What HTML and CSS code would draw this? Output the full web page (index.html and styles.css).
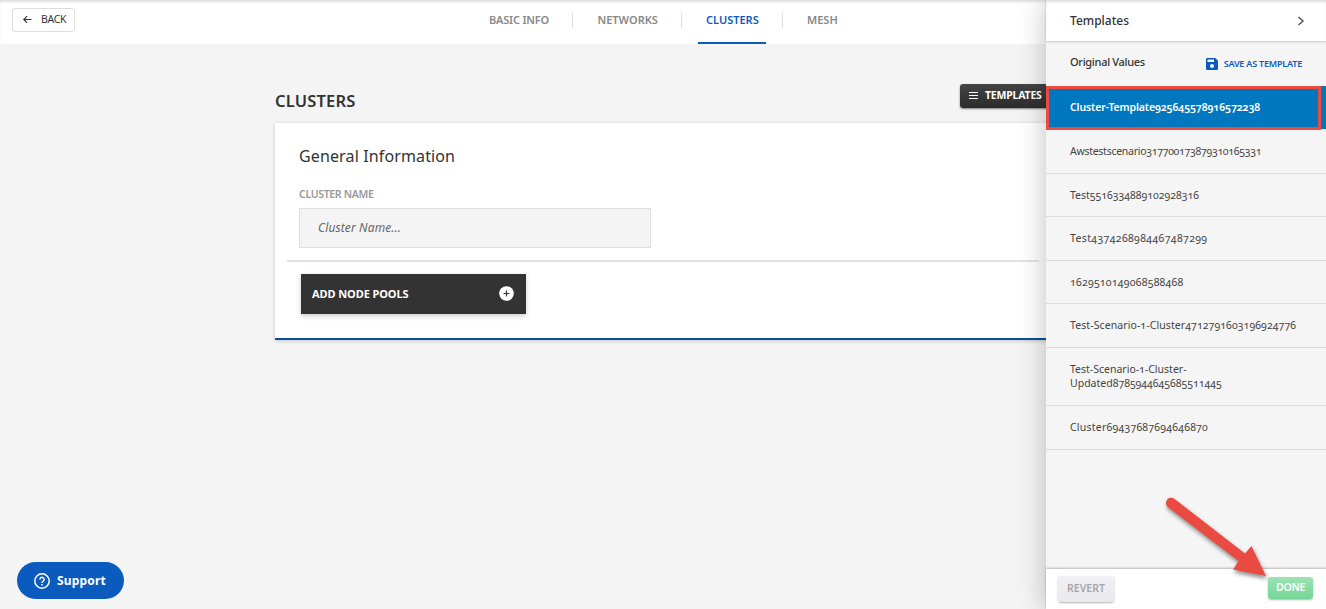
FILE: index.html
```html
<!DOCTYPE html>
<html lang="en">
<head>
<meta charset="utf-8">
<title>Clusters</title>
<link rel="stylesheet" href="styles.css">
</head>
<body>
<div class="app">
  <header class="topbar">
    <button class="back"><svg width="9" height="9" viewBox="0 0 9 9"><path d="M8.500 4.500H1M4 1.200L.8 4.500 4 7.800" fill="none" stroke="#333" stroke-width="1.200"/></svg><span>BACK</span></button>
    <nav class="tabs">
      <a class="tab tab-info">BASIC INFO</a>
      <a class="tab tab-net">NETWORKS</a>
      <a class="tab tab-clusters active">CLUSTERS</a>
      <a class="tab tab-mesh">MESH</a>
    </nav>
  </header>
  <main class="content">
    <div class="heading">
      <h1>CLUSTERS</h1>
      <button class="templates-btn"><svg width="9" height="10" viewBox="0 0 9 10"><path d="M0 2.500h9M0 5.500h9M0 8.500h9" stroke="#fff"/></svg><span>TEMPLATES</span></button>
    </div>
    <section class="card">
      <h2>General Information</h2>
      <label class="label">CLUSTER NAME</label>
      <div class="input">Cluster Name...</div>
      <div class="rule"></div>
      <button class="add"><span>ADD NODE POOLS</span><svg width="15" height="15" viewBox="0 0 15 15"><circle cx="7.500" cy="7.500" r="7.300" fill="#fff"/><path d="M4.500 7.500h6M7.500 4.500v6" stroke="#333" stroke-width="1.200"/></svg></button>
    </section>
  </main>
  <button class="support"><svg width="16" height="16" viewBox="0 0 16 16" fill="none" stroke="#fff"><circle cx="8" cy="8" r="7.200" stroke-width="1.500"/><path d="M5.900 6.400a2.100 2.100 0 1 1 3.300 1.700C8.400 8.700 8 8.900 8 9.900" stroke-width="1.400"/><path d="M8 11v1.500" stroke-width="1.500"/></svg><span>Support</span></button>
  <aside class="panel">
    <div class="panel-head"><span>Templates</span><svg width="8" height="10" viewBox="0 0 8 10"><path d="M1.500 1L6 5 1.500 9" fill="none" stroke="#555" stroke-width="1.500"/></svg></div>
    <div class="panel-sub"><span class="original">Original Values</span><a class="save"><svg width="12" height="12" viewBox="0 0 12 12"><path fill="#0b5bbf" fill-rule="evenodd" d="M1.300 0h8L12 2.700v8A1.300 1.300 0 0 1 10.700 12H1.300A1.300 1.300 0 0 1 0 10.700V1.300A1.300 1.300 0 0 1 1.300 0zM1.500 1.500V4H8V1.500zM6 6a2 2 0 1 0 .001 4A2 2 0 0 0 6 6z"/></svg><span>SAVE AS TEMPLATE</span></a></div>
    <ul class="list">
      <li class="item selected">Cluster-Template925645578916572238</li>
      <li class="item snug">Awstestscenario317700173879310165331</li>
      <li class="item">Test5516334889102928316</li>
      <li class="item loose">Test4374268984467487299</li>
      <li class="item roomy">1629510149068588468</li>
      <li class="item wide">Test-Scenario-1-Cluster4712791603196924776</li>
      <li class="item">Test-Scenario-1-Cluster-<br>Updated8785944645685511445</li>
      <li class="item roomy">Cluster69437687694646870</li>
    </ul>
    <footer class="panel-foot"><button class="revert">REVERT</button><button class="done">DONE</button></footer>
  </aside>
  <div class="highlight"></div>
  <svg class="arrow" width="120" height="100" viewBox="0 0 120 100"><path d="M14 8.500L85 63.500 91.500 56 106 86 73 79.500 78.500 71 8.500 17.500A5.200 5.200 0 0 1 14 8.500z" fill="#e94b43"/></svg>
</div>
</body>
</html>
```
FILE: styles.css
```css
*{box-sizing:border-box}
body{margin:0;background:#f4f4f4;color:#333;font-family:"Noto Sans","Open Sans",sans-serif;font-size:12px}
button{border:0;padding:0;font:inherit;color:inherit}
h1,h2,ul{margin:0;padding:0}
span,li{white-space:nowrap}
.app{position:relative;width:1326px;height:609px;overflow:hidden;background:#f4f4f4}
.topbar{display:flex;height:44px;background:#fff;box-shadow:inset 0 3px 3px -1px #ddd}
.back{display:flex;align-items:center;gap:9px;width:63px;height:24px;margin:8px 0 0 12px;padding:0 0 2px 10px;border:1px solid #ddd;border-radius:3px;background:#fff;font-size:10.500px;letter-spacing:-.3px}
.tabs{display:flex;margin-left:398px;font-size:11px;font-weight:600;color:#888}
.tab{position:relative;height:44px;line-height:40px}
.tab+.tab::before{content:"";position:absolute;left:0;top:13px;width:1px;height:15px;background:#ddd}
.tab-info{width:99px;padding-left:16px;letter-spacing:-.2px}
.tab-net{width:109px;padding-left:25.500px}
.tab-clusters{width:101px;padding-left:25px}
.tab-mesh{padding-left:25px}
.active{color:#0b5bbf}
.active::after{content:"";position:absolute;left:17px;bottom:0;width:68px;height:2px;background:#0b5bbf}
.content{padding:39px 0 0 275px}
.heading{display:flex;justify-content:space-between;height:40px}
h1{font-size:16.500px;font-weight:600;line-height:35px;letter-spacing:.18px}
.templates-btn{display:flex;align-items:center;gap:7px;width:366px;height:24px;padding:0 0 2px 9px;margin-top:1px;border-radius:3px;background:linear-gradient(#444,#2c2c2c);box-shadow:0 1px 2px rgba(0,0,0,.5);color:#fff;font-size:10.500px;font-weight:700;letter-spacing:-.2px}
.card{height:217px;padding:20px 0 0 24px;background:#fff;border-bottom:2px solid #0a4f9e;box-shadow:0 1px 4px rgba(0,0,0,.2)}
h2{font-size:16px;font-weight:400;line-height:26px;letter-spacing:.13px}
.label{display:block;margin-top:16px;line-height:18px;font-size:10.500px;font-weight:600;letter-spacing:-.32px;color:#999}
.input{width:352px;height:40px;margin-top:5px;padding-left:18px;border:1px solid #e0e0e0;background:#f4f4f4;font-size:12px;font-style:italic;line-height:38px;letter-spacing:.12px;color:#666}
.rule{width:752px;height:2px;margin:12px 0 12px -12px;background:#e2e2e2}
.add{display:flex;align-items:center;justify-content:space-between;width:225px;height:40px;margin-left:2px;padding:0 12.500px 1px 11px;background:#333;box-shadow:0 2px 5px rgba(0,0,0,.2);color:#fff;font-size:11px;font-weight:700;letter-spacing:-.09px}
.support{position:absolute;left:17px;top:562px;display:flex;align-items:center;gap:7px;width:107px;height:37px;padding-left:17px;border-radius:19px;background:#0b5bbf;color:#fff;font-size:12px;font-weight:700;letter-spacing:.18px}
.panel{position:absolute;right:0;top:0;display:flex;flex-direction:column;width:280px;height:609px;background:#f5f5f5;box-shadow:0 0 26px rgba(0,0,0,.25)}
.panel-head{display:flex;align-items:center;justify-content:space-between;height:41px;padding:0 21px 0 24px;background:#fff;box-shadow:inset 0 3px 3px -1px #ddd,0 1px 2px rgba(0,0,0,.2);font-weight:500}
.panel-sub{display:flex;justify-content:space-between;height:45.400px;padding:12px 24px 0;line-height:18px;font-weight:500}
.original{font-size:11px;letter-spacing:-.3px}
.save{display:flex;align-items:center;gap:5.500px;height:21px;color:#0b5bbf;font-size:9px;font-weight:600;letter-spacing:-.2px}
.list{list-style:none;flex:1;font-size:10.500px;font-variant-numeric:oldstyle-nums}
.item{padding:14.100px 24px;line-height:14.400px;border-bottom:1px solid #ddd;color:#444}
.snug{letter-spacing:-.27px}
.wide{letter-spacing:.09px}
.roomy{letter-spacing:.23px}
.loose{letter-spacing:.37px}
.selected{background:#0077be;color:#fff;font-weight:600;letter-spacing:-.13px}
.panel-foot{display:flex;justify-content:space-between;height:40px;padding:7px 13px;background:#fff;box-shadow:0 -1px 2px rgba(0,0,0,.25);font-size:10.500px;font-weight:600}
.revert{width:56px;height:26px;margin-left:-1px;padding-bottom:3px;border-radius:3px;background:linear-gradient(#f2f2f6,#e9e9ed);box-shadow:0 1px 2px rgba(0,0,0,.3);color:#a5a5a5}
.done{width:45px;height:22px;margin-top:1px;padding-bottom:2px;border-radius:3px;background:linear-gradient(#9be3b4,#72d695);box-shadow:0 1px 2px rgba(0,0,0,.3);color:#fff;letter-spacing:-.3px}
.highlight{position:absolute;left:1046px;top:86px;width:275px;height:44px;border:3px solid #e94b43}
.arrow{position:absolute;left:1160px;top:490px;filter:drop-shadow(1px 3px 2px rgba(0,0,0,.45))}
```
